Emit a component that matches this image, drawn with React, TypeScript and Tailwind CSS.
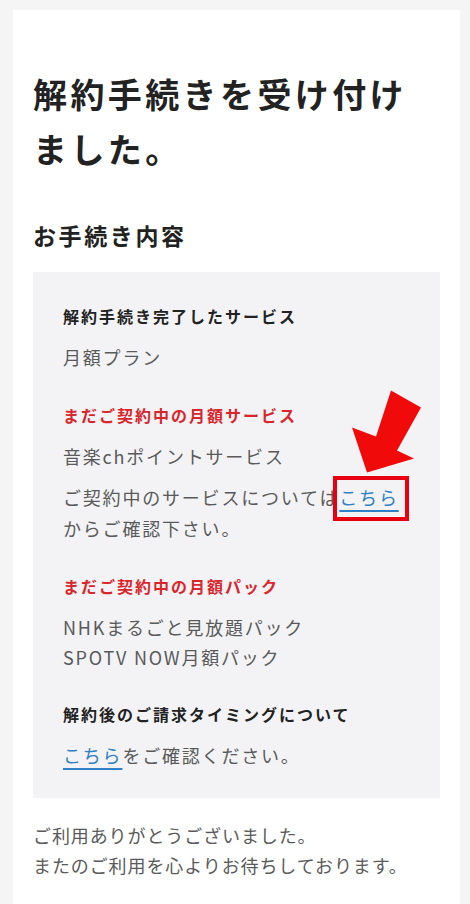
import React from "react";

const jp = { fontFamily: '"Noto Sans CJK JP", "Noto Sans", sans-serif' };

function Section({
  title,
  red,
  children,
}: {
  title: string;
  red?: boolean;
  children: React.ReactNode;
}) {
  return (
    <div>
      <h3
        className={`text-[16px] font-bold leading-[26px] tracking-[2px] ${
          red ? "text-[#d8262c]" : "text-[#222222]"
        }`}
      >
        {title}
      </h3>
      <div className="mt-[13px] text-[18px] leading-[31px] tracking-[1.8px] text-[#5a5a5a]">
        {children}
      </div>
    </div>
  );
}

function Link({ children }: { children: React.ReactNode }) {
  return (
    <span className="text-[#2f80c4] underline decoration-[#2f80c4] decoration-[1.5px] underline-offset-[5px]">
      {children}
    </span>
  );
}

export default function App() {
  return (
    <div style={jp} className="min-h-[904px] bg-[#f5f5f6] pt-[10px] pl-[13px] pr-[10px]">
      <div className="min-h-[894px] bg-white px-5 pt-[56px] pb-10">
        <h1 className="text-[34px] font-bold leading-[55px] tracking-[3.4px] text-[#222222]">
          解約手続きを受け付け
          <br />
          ました。
        </h1>
        <h2 className="mt-[41px] text-[23px] font-bold leading-[36px] tracking-[2.6px] text-[#222222]">
          お手続き内容
        </h2>

        <div className="relative mt-[19px] flex flex-col gap-[29px] bg-[#f3f3f5] pl-[30px] pr-4 pt-[31px] pb-[27px]">
          <Section title="解約手続き完了したサービス">
            <p>月額プラン</p>
          </Section>

          <Section title="まだご契約中の月額サービス" red>
            <p>音楽chポイントサービス</p>
            <p className="mt-[10px]">
              ご契約中のサービスについては
              <span className="relative">
                <Link>こちら</Link>
                {/* highlight box + arrow from the original screenshot */}
                <span className="pointer-events-none absolute -left-[6px] -right-[10px] -top-[8px] -bottom-[11px] border-[4px] border-[#e60012]" />
                <svg
                  className="pointer-events-none absolute left-[10px] -top-[97px]"
                  width="75"
                  height="90"
                  viewBox="0 0 75 90"
                >
                  <polygon
                    points="42,3.5 72,20.5 48,63.5 65,71.5 18,85.5 3,40.5 27,49.5"
                    fill="#f00a0a"
                  />
                </svg>
              </span>
              <br />
              からご確認下さい。
            </p>
          </Section>

          <Section title="まだご契約中の月額パック" red>
            <p className="leading-[30px]">NHKまるごと見放題パック</p>
            <p className="leading-[30px]">SPOTV NOW月額パック</p>
          </Section>

          <Section title="解約後のご請求タイミングについて">
            <p>
              <Link>こちら</Link>をご確認ください。
            </p>
          </Section>
        </div>

        <div className="mt-[22px] text-[18px] leading-[30px] tracking-[0.9px] text-[#5a5a5a]">
          <p>ご利用ありがとうございました。</p>
          <p>またのご利用を心よりお待ちしております。</p>
        </div>
      </div>
    </div>
  );
}
